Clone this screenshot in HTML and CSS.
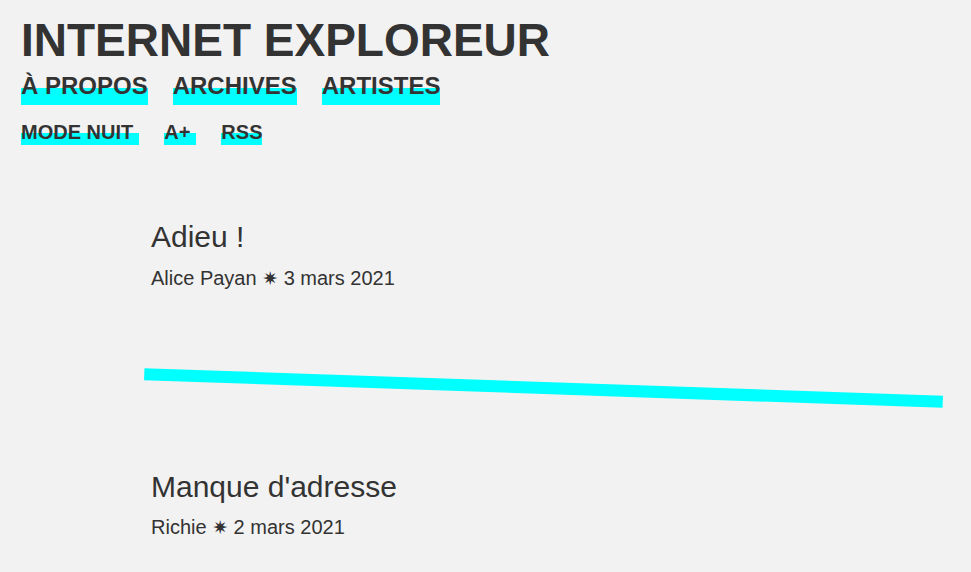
FILE: index.html
```html
<!DOCTYPE html>
<html lang="fr">
<head>
<meta charset="utf-8">
<title>Internet Exploreur</title>
<link rel="stylesheet" href="styles.css">
</head>
<body>
<header class="site-header">
  <h1 class="site-title">INTERNET EXPLOREUR</h1>
  <nav class="main-nav">
    <a class="main-link" href="#">À PROPOS</a>
    <a class="main-link" href="#">ARCHIVES</a>
    <a class="main-link" href="#">ARTISTES</a>
  </nav>
  <div class="tools">
    <a class="tool-link tool-spaced" href="#">MODE NUIT</a>
    <a class="tool-link tool-spaced" href="#">A+</a>
    <a class="tool-link" href="#">RSS</a>
  </div>
</header>
<main class="posts">
  <article class="post">
    <h2 class="post-title">Adieu !</h2>
    <p class="post-meta">Alice Payan <span class="star">✷</span> 3 mars 2021</p>
  </article>
  <hr class="separator">
  <article class="post">
    <h2 class="post-title">Manque d'adresse</h2>
    <p class="post-meta">Richie <span class="star">✷</span> 2 mars 2021</p>
  </article>
</main>
</body>
</html>
```
FILE: styles.css
```css
html, body {
  margin: 0;
  padding: 0;
}
body {
  background: #f2f2f2;
  color: #333333;
  font-family: "Liberation Sans", Arial, sans-serif;
  padding: 13px 21px 0 21px;
  overflow: hidden;
}
.site-header {
  display: flex;
  flex-direction: column;
  align-items: flex-start;
}
.site-title {
  margin: 0;
  font-size: 46px;
  font-weight: bold;
  line-height: normal;
}
.main-nav {
  display: flex;
  gap: 25px;
  margin-top: 5px;
}
.main-link {
  display: block;
  color: #333333;
  text-decoration: none;
  font-weight: bold;
  font-size: 24px;
  line-height: 28px;
  padding-bottom: 5px;
  background: linear-gradient(to bottom, transparent 16.5px, #00ffff 16.5px);
}
.tools {
  display: flex;
  gap: 25px;
  margin-top: 16px;
}
.tool-link {
  display: block;
  color: #333333;
  text-decoration: none;
  font-weight: bold;
  font-size: 20px;
  line-height: 23px;
  padding-bottom: 1px;
  background: linear-gradient(to bottom, transparent 12px, #00ffff 12px);
}
.tool-spaced {
  padding-right: 6px;
}
.posts {
  padding-left: 130px;
  margin-top: 75px;
}
.post-title {
  margin: 0;
  font-size: 30px;
  font-weight: normal;
  line-height: normal;
}
.post-meta {
  margin: 12.5px 0 0 0;
  font-size: 20px;
  line-height: 23px;
}
.star {
  font-family: "DejaVu Sans", sans-serif;
  font-size: 19px;
}
.separator {
  border: 0;
  height: 12px;
  width: 799px;
  margin: 92px 0 76px -7px;
  background: #00ffff;
  transform: rotate(1.98deg);
}
```
